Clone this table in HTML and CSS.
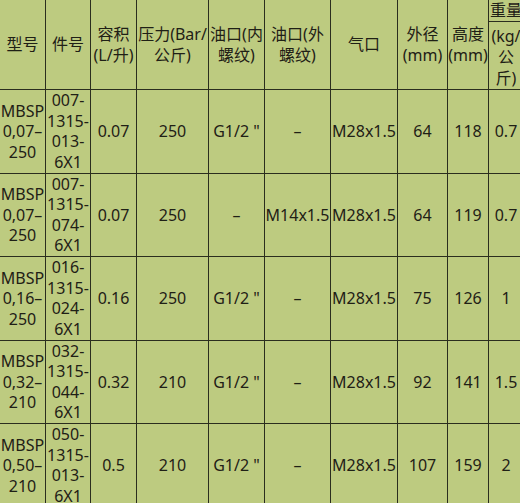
FILE: index.html
```html
<!DOCTYPE html>
<html lang="zh">
<head>
<meta charset="utf-8">
<link rel="stylesheet" href="styles.css">
</head>
<body>
<div class="wrap">
<table class="spec">
  <colgroup>
    <col class="c1"><col class="c2"><col class="c3"><col class="c4"><col class="c5">
    <col class="c6"><col class="c7"><col class="c8"><col class="c9"><col class="c10">
  </colgroup>
  <thead>
    <tr>
      <th>型号</th>
      <th>件号</th>
      <th>容积<br>(L/升)</th>
      <th>压力(Bar/<br>公斤)</th>
      <th>油口(内<br>螺纹)</th>
      <th>油口(外<br>螺纹)</th>
      <th>气口</th>
      <th>外径<br>(mm)</th>
      <th>高度<br>(mm)</th>
      <th class="wt"><span class="wt-top">重量</span>(kg/<br>公<br>斤)</th>
    </tr>
  </thead>
  <tbody>
    <tr>
      <td>MBSP<br>0,07–<br>250</td>
      <td>007-<br>1315-<br>013-<br>6X1</td>
      <td>0.07</td><td>250</td><td>G1/2 "</td><td>–</td><td>M28x1.5</td><td>64</td><td>118</td><td>0.7</td>
    </tr>
    <tr>
      <td>MBSP<br>0,07–<br>250</td>
      <td>007-<br>1315-<br>074-<br>6X1</td>
      <td>0.07</td><td>250</td><td>–</td><td>M14x1.5</td><td>M28x1.5</td><td>64</td><td>119</td><td>0.7</td>
    </tr>
    <tr>
      <td>MBSP<br>0,16–<br>250</td>
      <td>016-<br>1315-<br>024-<br>6X1</td>
      <td>0.16</td><td>250</td><td>G1/2 "</td><td>–</td><td>M28x1.5</td><td>75</td><td>126</td><td>1</td>
    </tr>
    <tr>
      <td>MBSP<br>0,32–<br>210</td>
      <td>032-<br>1315-<br>044-<br>6X1</td>
      <td>0.32</td><td>210</td><td>G1/2 "</td><td>–</td><td>M28x1.5</td><td>92</td><td>141</td><td>1.5</td>
    </tr>
    <tr>
      <td>MBSP<br>0,50–<br>210</td>
      <td>050-<br>1315-<br>013-<br>6X1</td>
      <td>0.5</td><td>210</td><td>G1/2 "</td><td>–</td><td>M28x1.5</td><td>107</td><td>159</td><td>2</td>
    </tr>
  </tbody>
</table>
</div>
</body>
</html>
```

FILE: styles.css
```css
html, body {
  margin: 0;
  padding: 0;
  overflow: hidden;
  background: #bdcb80;
}
.wrap {
  width: 520px;
  height: 503px;
  overflow: hidden;
}
.spec {
  margin: -1px 0 0 -1px;
  border-collapse: collapse;
  table-layout: fixed;
  width: 524px;
  background: #bdcb80;
  font-family: "Noto Sans", "Noto Sans CJK SC", sans-serif;
  font-size: 16px;
  line-height: 20.5px;
  color: #1f2016;
}
.spec th, .spec td {
  border: 1px solid #2a2d1e;
  padding: 0;
  text-align: center;
  vertical-align: middle;
  font-weight: normal;
  white-space: nowrap;
}
.spec thead tr { height: 87px; }
.spec tbody tr { height: 83.5px; }
.c1 { width: 46px; }
.c2 { width: 45px; }
.c3 { width: 46px; }
.c4 { width: 72px; }
.c5 { width: 56px; }
.c6 { width: 66px; }
.c7 { width: 67px; }
.c8 { width: 50px; }
.c9 { width: 41px; }
.c10 { width: 35px; }
.spec th { line-height: 21px; }
.wt { vertical-align: top; }
.wt-top {
  display: block;
  border-bottom: 1px solid #2a2d1e;
  margin-bottom: 4px;
}
```
